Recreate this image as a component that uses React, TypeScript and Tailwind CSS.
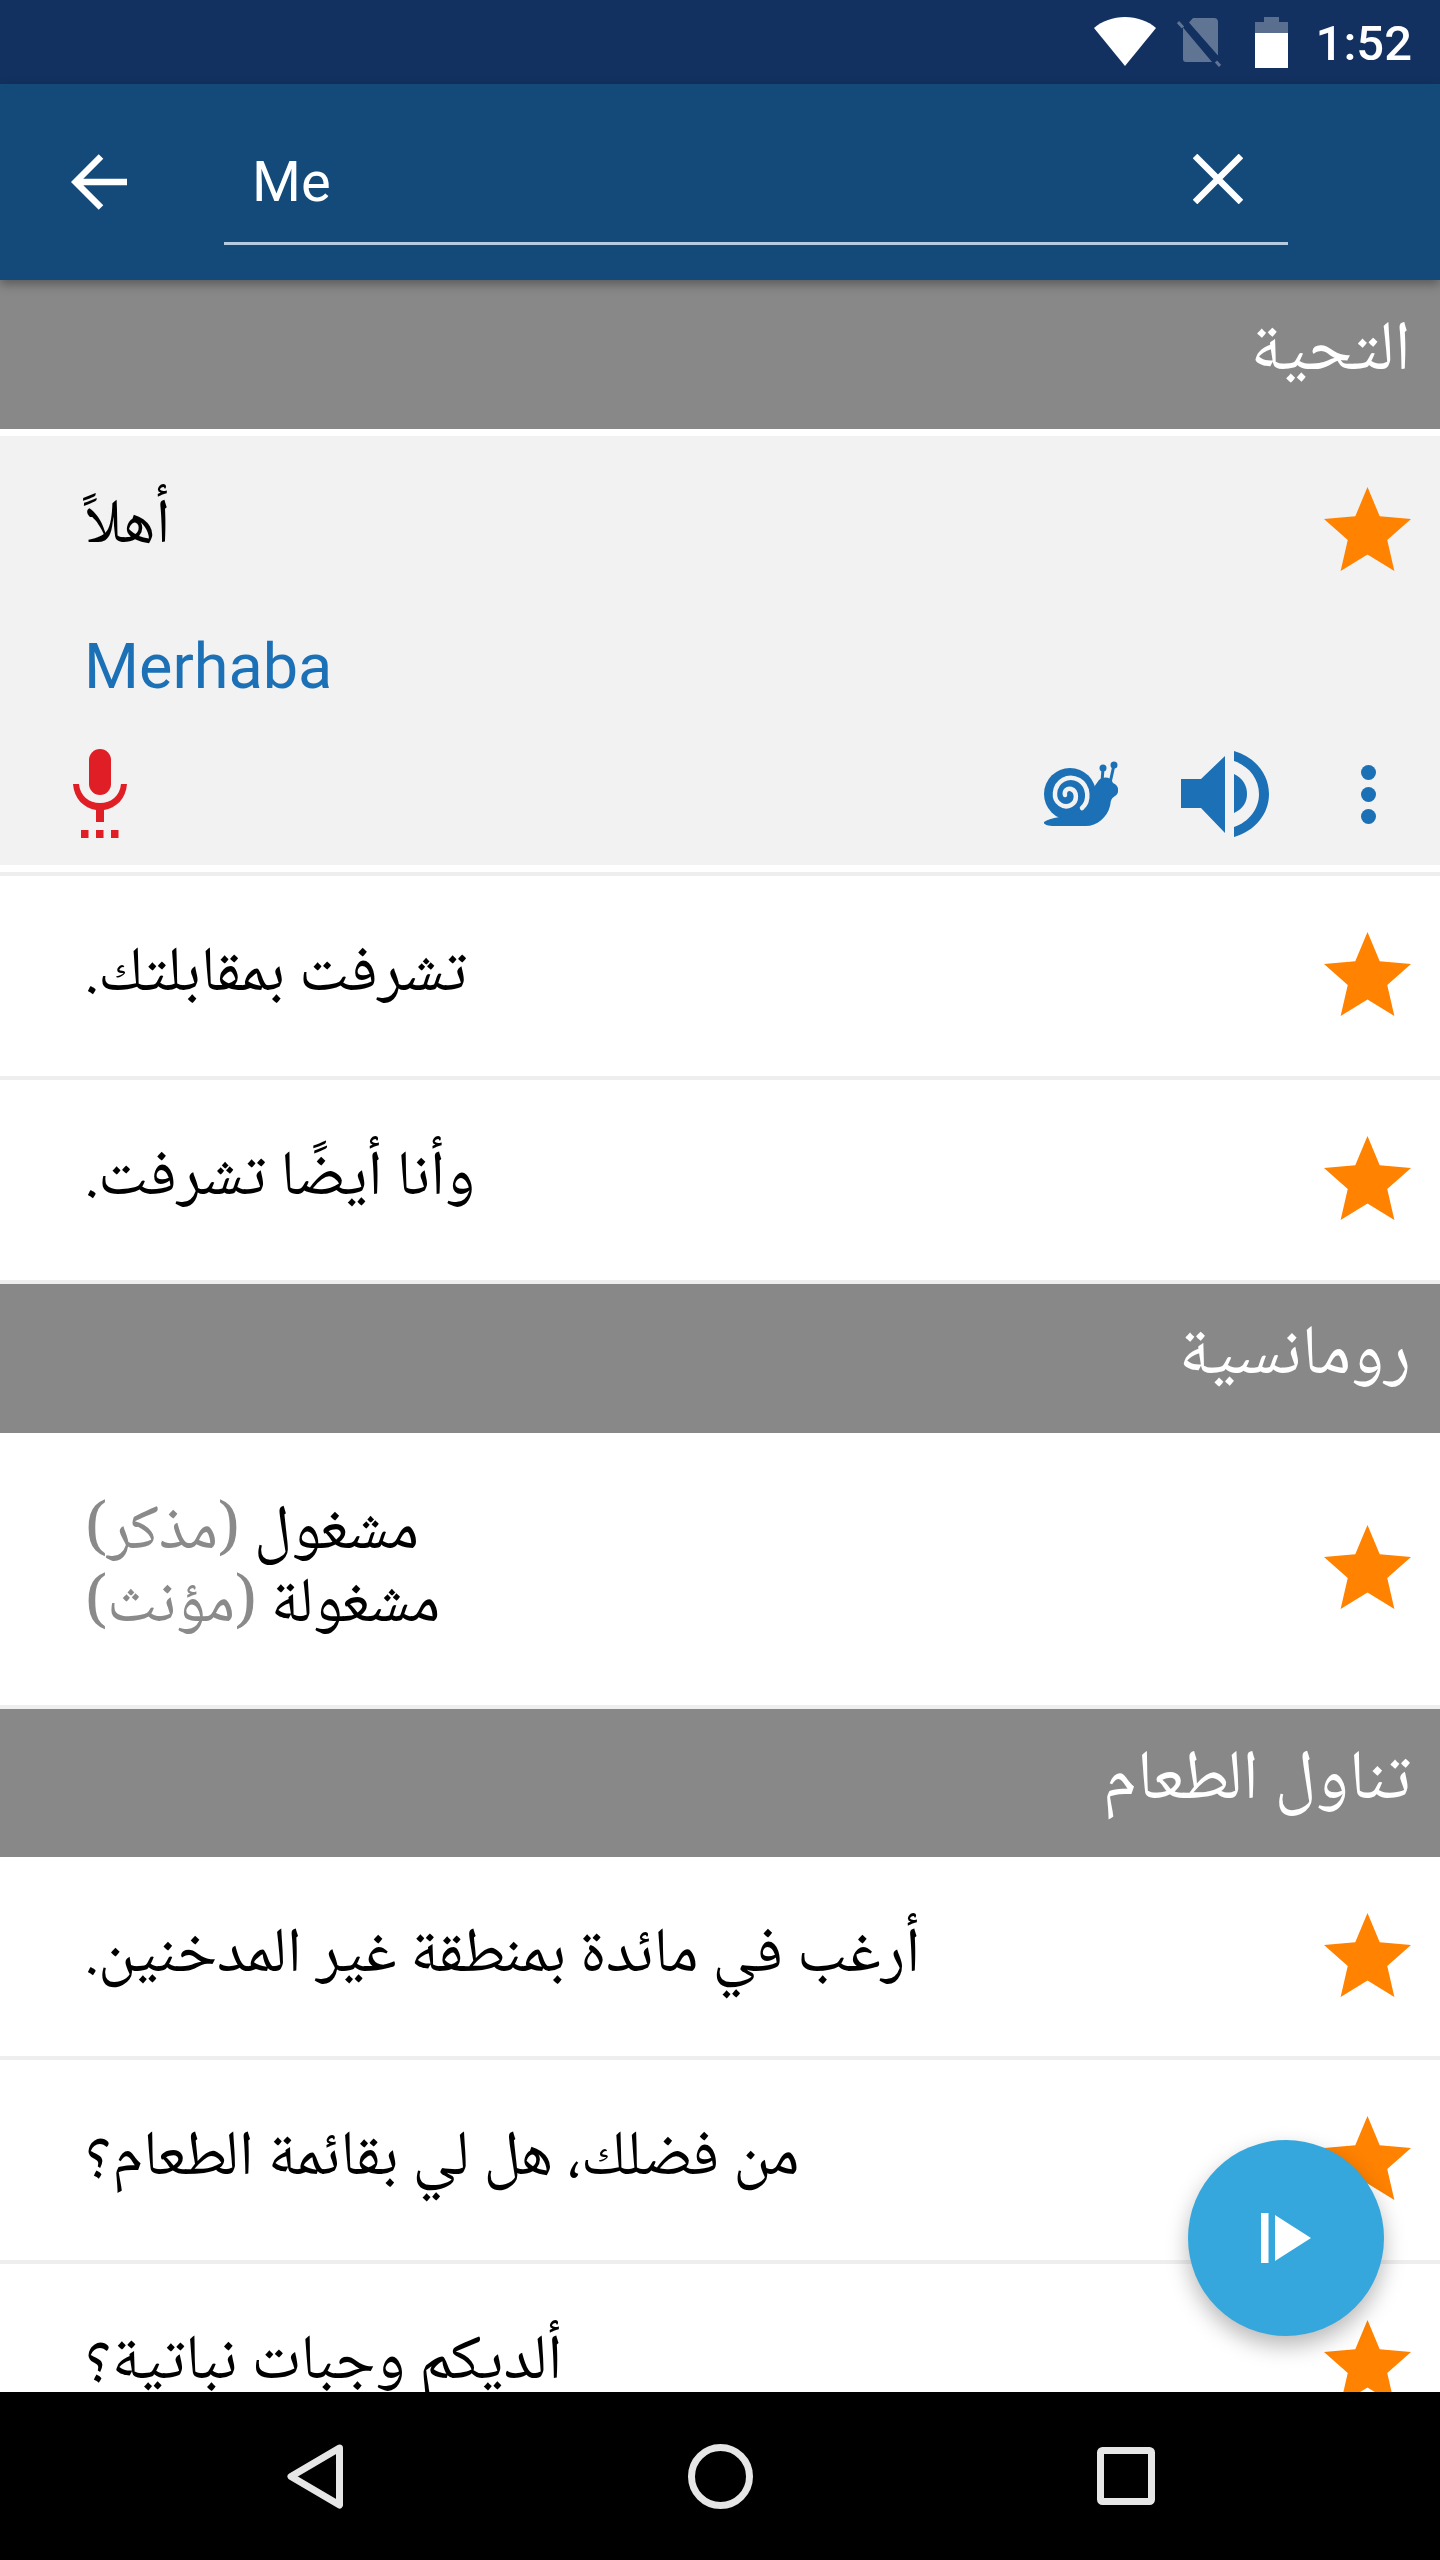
import React from "react";

const arabic = "[font-family:'Noto_Naskh_Arabic','Noto_Sans_Arabic','DejaVu_Sans',sans-serif]";

function Star() {
  return (
    <div className="shrink-0 pb-[4px]">
      <svg width="87" height="84" viewBox="2 2 20 19" preserveAspectRatio="none" className="block">
        <path fill="#ff8200" d="M12 17.27L18.18 21l-1.64-7.03L22 9.24l-7.19-.61L12 2 9.19 8.63 2 9.24l5.46 4.73L5.82 21z" />
      </svg>
    </div>
  );
}

function Header({ text, h }: { text: string; h: string }) {
  return (
    <div dir="rtl" className={`${arabic} ${h} shrink-0 bg-[#888888] pr-[29px] pb-[2px] flex items-center text-[70px] text-white`}>
      {text}
    </div>
  );
}

function Row({ text, h }: { text: string; h: string }) {
  return (
    <div className={`${h} shrink-0 bg-white flex items-center justify-between pl-[85px] pr-[29px]`}>
      <div dir="rtl" className={`${arabic} text-[63.5px] leading-[96px] text-black text-left whitespace-nowrap`}>{text}</div>
      <Star />
    </div>
  );
}

function Line() {
  return <div className="h-[4px] shrink-0 bg-[#eeeeee]" />;
}

function Snail() {
  return (
    <svg width="74" height="66" viewBox="0 0 74 66" className="block">
      <g fill="#1b70b6">
        <circle cx="26" cy="33" r="26" />
        <path d="M0 61 C8 56 20 56 30 52 L50 26 L55 19 C60 15 67 16 69 22 C75 24 76 32 71 35 C66 38 67 41 66 45 C63 57 52 66 40 65 L10 65 C3 65 -1 63 0 61Z" />
        <circle cx="59" cy="7" r="3.5" />
        <circle cx="70" cy="4" r="3.5" />
      </g>
      <g fill="none" stroke="#1b70b6" strokeWidth="3">
        <path d="M59 7 L58 22" />
        <path d="M70 4 L66 22" />
      </g>
      <path
        fill="none"
        stroke="#f2f2f2"
        strokeWidth="4.5"
        strokeLinecap="round"
        d="M38 47 C46 40 45 25 35 19 C24 13 12 20 11 32 C10 42 20 48 27 44 C34 40 33 30 27 28 C23 27 20 30 21 34"
      />
    </svg>
  );
}

function Speaker() {
  return (
    <svg width="88" height="86" viewBox="0 0 88 86" className="block">
      <path fill="#1b70b6" d="M0 28 H20 L44 5 V82 L20 57 H0Z" />
      <path fill="#1b70b6" d="M53 23 C62 27 66 35 66 43 C66 51 62 58 53 62Z" />
      <path fill="#1b70b6" d="M53 0 C74 6 88 23 88 43 C88 63 74 80 53 86 V76 C68 71 78 58 78 43 C78 28 68 15 53 10Z" />
    </svg>
  );
}

function Mic() {
  return (
    <svg width="54" height="90" viewBox="0 0 54 90" className="block">
      <g fill="#df1f25">
        <rect x="16" y="0" width="22" height="46" rx="11" />
        <path d="M0 35 H6 C7 47 16 54 27 54 C38 54 47 47 48 35 H54 C53 50 43 59 31 61 V73 H23 V61 C11 59 1 50 0 35Z" />
        <rect x="8" y="81" width="7.5" height="8" />
        <rect x="23" y="81" width="7.5" height="8" />
        <rect x="38" y="81" width="7.5" height="8" />
      </g>
    </svg>
  );
}

export default function App() {
  return (
    <div className="relative w-[1440px] h-[2560px] overflow-hidden flex flex-col bg-white [font-family:Roboto,sans-serif]">
      {/* status bar */}
      <div className="h-[84px] shrink-0 bg-[#133160] flex items-center justify-end pr-[28px]">
        <svg width="62" height="49" viewBox="0 0 62 49" className="mr-[21px] mt-[-1px]">
          <path fill="#fff" d="M31 49 L0 11 C8 4 19 0 31 0 C43 0 54 4 62 11Z" />
        </svg>
        <svg width="44" height="50" viewBox="0 0 44 50" className="mr-[34px] mt-[2px]">
          <path fill="#fff" fillOpacity="0.33" d="M16 0 H37 C39.500 0 41 1.500 41 4 V37.500 L12 4.500Z M6 9.500 L35 44 H9 C7 44 6 43 6 41Z" />
          <path stroke="#fff" strokeOpacity="0.33" strokeWidth="3" d="M1 4 L6 9.500 M39 43.500 L43 48" />
        </svg>
        <svg width="33" height="51" viewBox="0 0 33 51" className="mr-[28px]">
          <path fill="#fff" fillOpacity="0.3" d="M9 0 H24 V5 H33 V16 H0 V5 H9Z" />
          <rect x="0" y="16" width="33" height="35" fill="#fff" />
        </svg>
        <span className="text-[49px] font-medium text-white leading-none mt-[3px]">1:52</span>
      </div>

      {/* toolbar */}
      <div className="relative z-10 h-[196px] shrink-0 bg-[#144a7a] shadow-[0_4px_10px_rgba(0,0,0,0.35)] flex pl-[71px]">
        <div className="w-[153px] shrink-0 h-[160px] pt-[36px] flex items-center">
          <svg width="56" height="56" viewBox="0 0 56 56">
            <path fill="none" stroke="#fff" strokeWidth="6.5" d="M56 28 H5 M30 2.500 L4.500 28 L30 53.500" />
          </svg>
        </div>
        <div className="w-[1064px] h-[161px] pt-[36px] border-b-[3px] border-[#b5cbe0] flex items-center justify-between pl-[28px] pr-[45px]">
          <span className="text-[56px] text-white leading-none mt-[2px]">Me</span>
          <svg width="50" height="50" viewBox="0 0 50 50" className="mt-[-4px]">
            <path stroke="#fff" strokeWidth="6.5" d="M2 2 L48 48 M48 2 L2 48" />
          </svg>
        </div>
      </div>

      {/* list */}
      <div className="flex-1 min-h-0 overflow-hidden flex flex-col">
        <Header h="h-[149px]" text="التحية" />
        <div className="h-[7px] shrink-0 bg-white" />
        <div className="h-[429px] shrink-0 bg-[#f2f2f2] flex flex-col pl-[73px] pr-[29px] pt-[51px]">
          <div className="flex items-start justify-between h-[120px] pl-[12px]">
            <div dir="rtl" className={`${arabic} text-[63px] text-black text-left leading-[84px]`}>أهلاً</div>
            <Star />
          </div>
          <div className="pl-[11px] mt-[24px] text-[63px] leading-[72px] text-[#1b70b6]">Merhaba</div>
          <div className="flex items-center justify-between h-[92px] mt-[45px]">
            <Mic />
            <div className="flex items-center">
              <Snail />
              <div className="ml-[63px]"><Speaker /></div>
              <div className="ml-[92px] mr-[35px] flex flex-col gap-[7px]">
                <div className="w-[15px] h-[15px] rounded-full bg-[#1b70b6]" />
                <div className="w-[15px] h-[15px] rounded-full bg-[#1b70b6]" />
                <div className="w-[15px] h-[15px] rounded-full bg-[#1b70b6]" />
              </div>
            </div>
          </div>
        </div>
        <div className="h-[7px] shrink-0 bg-white" />
        <Line />
        <Row h="h-[200px]" text="تشرفت بمقابلتك." />
        <Line />
        <Row h="h-[200px]" text="وأنا أيضًا تشرفت." />
        <Line />
        <Header h="h-[149px]" text="رومانسية" />
        <div className="h-[272px] shrink-0 bg-white flex items-center justify-between pl-[85px] pr-[29px]">
          <div dir="rtl" className={`${arabic} text-[63.5px] leading-[73px] pt-[3px] text-black text-left whitespace-nowrap`}>
            <div>مشغول <span className="text-[#8a8a8a]">(مذكر)</span></div>
            <div>مشغولة <span className="text-[#8a8a8a]">(مؤنث)</span></div>
          </div>
          <Star />
        </div>
        <Line />
        <Header h="h-[148px]" text="تناول الطعام" />
        <Row h="h-[199px]" text="أرغب في مائدة بمنطقة غير المدخنين." />
        <Line />
        <Row h="h-[200px]" text="من فضلك، هل لي بقائمة الطعام؟" />
        <Line />
        <Row h="h-[200px]" text="ألديكم وجبات نباتية؟" />
      </div>

      {/* nav bar */}
      <div className="h-[168px] shrink-0 bg-black relative z-10 flex items-center pl-[287px]">
        <svg width="56" height="65" viewBox="0 0 56 65">
          <path fill="none" stroke="#e6e6e6" strokeWidth="7" strokeLinejoin="round" d="M52.500 4 L4 32.500 L52.500 61Z" />
        </svg>
        <svg width="65" height="65" viewBox="0 0 65 65" className="ml-[345px]">
          <circle cx="32.500" cy="32.500" r="29" fill="none" stroke="#e6e6e6" strokeWidth="7" />
        </svg>
        <svg width="58" height="58" viewBox="0 0 58 58" className="ml-[344px]">
          <rect x="3.500" y="3.500" width="51" height="51" rx="2" fill="none" stroke="#e6e6e6" strokeWidth="7" />
        </svg>
      </div>

      {/* FAB */}
      <div className="absolute left-[1188px] top-[2140px] w-[196px] h-[196px] rounded-full bg-[#35a7dc] shadow-[0_10px_22px_rgba(0,0,0,0.28)] flex items-center justify-center">
        <svg width="50" height="50" viewBox="0 0 50 50">
          <rect x="0" y="0" width="7.500" height="50" fill="#fff" />
          <path fill="#fff" d="M14 2 L50 25 L14 48Z" />
        </svg>
      </div>
    </div>
  );
}
